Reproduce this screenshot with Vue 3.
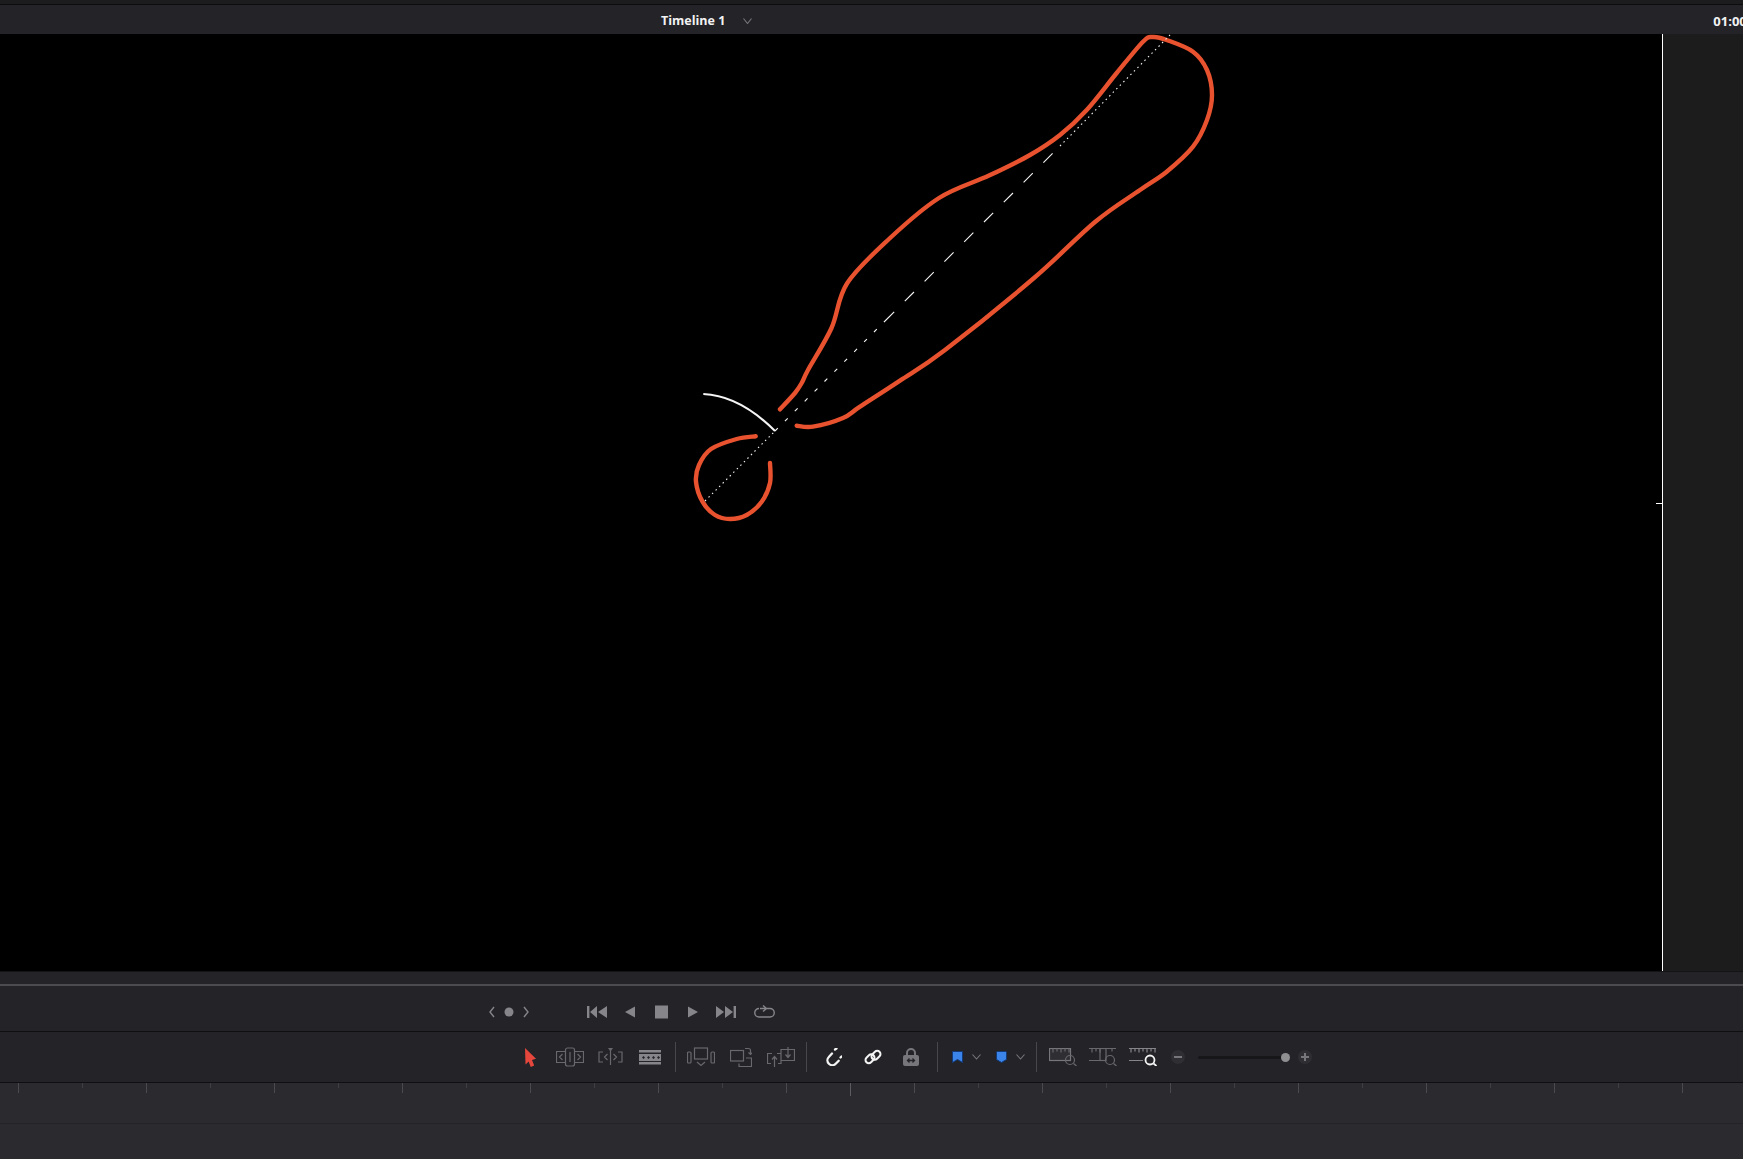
<template>
  <div class="editor">
    <div class="top-strip"></div>

    <header class="title-bar">
      <span class="title">Timeline 1</span>
      <svg class="title-chevron" width="9" height="6" viewBox="0 0 9 6"><path d="M.5.5l4 5 4-5" /></svg>
      <span class="timecode">01:00:00:00</span>
    </header>

    <section class="viewer">
      <div class="canvas">
        <svg class="drawing" width="1662" height="936" viewBox="0 34 1662 936">
          <path class="ink" :d="loopPath" />
          <path class="ink" :d="outlinePath" />
          <path class="arc" d="M703.3 394C727 395 752 408 775 431" />
          <path class="guide guide-dots" d="M705 501L775 431" />
          <path class="guide guide-short" d="M775 431L885 321" />
          <path class="guide guide-dash" d="M885 321L1060 146" />
          <path class="guide guide-dots" d="M1060 146L1170 35" />
          <path class="center-mark" d="M1656 503.5H1662" />
        </svg>
      </div>
      <div class="side-panel"></div>
    </section>

    <div class="splitter"></div>

    <div class="transport">
      <svg class="dim-stroke" width="40" height="14" viewBox="0 0 40 14">
        <path d="M5 2L1 7l4 5M35 2l4 5-4 5" />
        <circle class="solid" cx="20" cy="7" r="4.5" />
      </svg>
      <svg class="gap-58" width="20" height="14" viewBox="0 0 20 14"><path class="solid" d="M0 1h2.4v12H0zM10 1v12L3 7zM20 1v12L11 7z" /></svg>
      <svg class="gap-18" width="10" height="14" viewBox="0 0 10 14"><path class="solid" d="M10 1.5v11L0 7z" /></svg>
      <svg class="gap-20" width="13" height="14" viewBox="0 0 13 14"><rect class="solid" y=".5" width="13" height="13" /></svg>
      <svg class="gap-20" width="10" height="14" viewBox="0 0 10 14"><path class="solid" d="M0 1.5v11L10 7z" /></svg>
      <svg class="gap-18" width="20" height="14" viewBox="0 0 20 14"><path class="solid" d="M0 1v12l8-6zM9 1v12l8-6zM17.6 1H20v12h-2.4z" /></svg>
      <svg class="dim-stroke gap-18" width="21" height="16" viewBox="0 0 21 16">
        <path d="M5 4.500a4 4 0 0 0 0 8.500h11a4 4 0 0 0 0-8.500H6M9 1.500l3.500 3L9 7.500" />
      </svg>
    </div>

    <div class="tools">
      <svg width="11" height="19" viewBox="0 0 11 19"><path fill="#e5473c" d="M0 0l11 10.8-4 1.2 2.2 5.500-3.500 1.500-2-5.500L.5 16.500z" /></svg>

      <svg class="faint gap-20" width="28" height="20" viewBox="0 0 28 20">
        <path d="M9.5 4.500H.5v11h9M18.500 4.500h9v11h-9M6.500 7l-3 3 3 3M21.500 7l3 3-3 3" />
        <rect x="9.5" y="1" width="9" height="18" rx="2" />
        <path d="M14 5v10" stroke-width="2" />
      </svg>
      <svg class="faint gap-14" width="25" height="20" viewBox="0 0 25 20">
        <path d="M5 5H1v10h4M20 5h4v10h-4M9.5 7l-3 3 3 3M15.500 7l3 3-3 3M12.500 3v15" />
        <path class="fill" d="M10 1h5l-2.500 3.500z" />
      </svg>
      <svg class="gap-16" width="22" height="15" viewBox="0 0 22 15">
        <path fill="#85858a" d="M0 0h22v2.600H0zM0 12h22v2.600H0zM0 4h22v7H0z" />
        <path fill="#232328" d="M3 7.500l1.500-1.500L6 7.500 4.500 9zM8 7.500L9.500 6 11 7.500 9.500 9zM13 7.500L14.500 6 16 7.500 14.500 9zM18 7.500L19.500 6 21 7.500 19.500 9z" />
      </svg>

      <span class="divider gap-14"></span>

      <svg class="faint gap-11" width="28" height="20" viewBox="0 0 28 20">
        <rect x="7.5" y="1" width="13" height="11" />
        <rect x=".5" y="5" width="3.5" height="11" rx="1" />
        <rect x="24" y="5" width="3.5" height="11" rx="1" />
        <path d="M10 15l4 3.500 4-3.500" />
      </svg>
      <svg class="faint gap-15" width="22" height="20" viewBox="0 0 22 20">
        <rect x=".5" y="3.5" width="13" height="10.5" />
        <path d="M16 11h5.500v8.500H9V16.500M15 1.500h3.500a2 2 0 0 1 2 2V7M18.500 5.500l2 2 2-2" />
      </svg>
      <svg class="faint gap-15" width="28" height="22" viewBox="0 0 28 22">
        <path d="M5 7.500H.5v10H4M10 7.500h4v10h-3M14 3.500h13.500v11H14zM7.500 21v-10M5 13.500l2.500-3 2.500 3M21 1v10M18.500 8.500l2.500 3 2.500-3" />
      </svg>

      <span class="divider gap-11"></span>

      <svg class="bright gap-18" width="17" height="18" viewBox="0 0 17 18">
        <path d="M7 5.500L3.800 9a4.800 4.800 0 0 0 6.900 6.700l3-3" />
        <path d="M10 1.500l1.500-1M15.500 9.500l1-1" />
      </svg>
      <svg class="bright link gap-22" width="18" height="18" viewBox="0 0 18 18">
        <rect x="1" y="7.5" width="10" height="6.5" rx="3.25" transform="rotate(-45 6 10.75)" />
        <rect x="7" y="4" width="10" height="6.5" rx="3.25" transform="rotate(-45 12 7.25)" />
      </svg>
      <svg class="gap-21" width="16" height="18" viewBox="0 0 16 18">
        <path class="shackle" d="M4 7.500V5a4 4 0 0 1 8 0v2.500" />
        <rect fill="#77777b" y="7" width="16" height="11" rx="2" />
        <path class="cutout" d="M5 12.500h6M6.500 10.500l-2 2 2 2M9.500 10.500l2 2-2 2" />
      </svg>

      <span class="divider gap-18"></span>

      <svg class="gap-14" width="11" height="12" viewBox="0 0 11 12"><path class="blue" d="M.5.500h10v11L5.500 8.500l-5 3z" /></svg>
      <svg class="mini-chevron gap-9" width="9" height="6" viewBox="0 0 9 6"><path d="M.5.500l4 4.500 4-4.500" /></svg>
      <svg class="gap-15" width="11" height="12" viewBox="0 0 11 12"><path class="blue" d="M.5 1.500q0-1 1-1h8q1 0 1 1v7l-5 3-5-3z" /></svg>
      <svg class="mini-chevron gap-9" width="9" height="6" viewBox="0 0 9 6"><path d="M.5.500l4 4.500 4-4.500" /></svg>

      <span class="divider gap-11"></span>

      <svg class="faint gap-12" width="28" height="18" viewBox="0 0 28 18">
        <rect class="ruler-box" x=".5" y=".5" width="21" height="12" />
        <path d="M4 .5v4M8 .5v3M12 .5v4M16 .5v3M20 .5v4" />
        <circle cx="21" cy="12" r="4.5" />
        <path d="M24.500 15.500L27.500 18" stroke-width="1.8" />
      </svg>
      <svg class="faint gap-12" width="28" height="18" viewBox="0 0 28 18">
        <path d="M0 .5h27M0 12.500h13M3 .5v4M7 .5v3M11 .5v4M23 .5v3" />
        <rect x="11" y=".5" width="6" height="12" />
        <circle cx="21" cy="12" r="4.5" />
        <path d="M24.500 15.500L27.500 18" stroke-width="1.8" />
      </svg>
      <svg class="faint gap-12" width="28" height="18" viewBox="0 0 28 18">
        <path class="ticks" d="M0 .5h27M0 12.500h14M2 .5v4M6 .5v3M10 .5v4M14 .5v3M18 .5v4M22 .5v3M26 .5v4" />
        <circle class="lens" cx="21" cy="12" r="4.5" />
        <path class="lens" d="M24.500 15.500L27.500 18" />
      </svg>

      <span class="round-btn gap-14"><i class="minus"></i></span>
      <div class="zoom-slider gap-13"><span class="thumb"></span></div>
      <span class="round-btn gap-8"><i class="minus"></i><i class="minus upright"></i></span>
    </div>

    <div class="ruler">
      <span
        v-for="n in ticks"
        :key="n"
        class="tick"
        :class="{ major: n % 2 === 1, playhead: n === 14 }"
      ></span>
    </div>
    <div class="track"></div>
  </div>
</template>

<script setup>
// the scribble traced off the viewer, smoothed with catmull-rom
const loop = [
  [755.7, 436.3], [736.7, 439], [711, 449], [699, 465], [696, 481.7], [702.5, 501.7],
  [715, 515], [730, 519], [746.7, 515], [761.7, 501.7], [770, 483], [770, 463],
]

const outline = [
  [780, 409.3], [795, 393], [801.7, 383], [808, 370], [831.5, 328], [847, 283.5], [889, 239],
  [939, 198], [989, 175.6], [1030, 155], [1060, 135], [1086.7, 110], [1116.7, 73], [1143, 41.7],
  [1153, 37], [1166.7, 40], [1193, 51.7], [1207, 70], [1212, 95], [1207, 120], [1193, 146.7],
  [1166.7, 171.7], [1140, 190], [1095, 222], [1034, 278], [945, 350], [900, 380.7], [860, 406.7],
  [843, 418], [813, 426.7], [796.7, 425.7],
]

function smooth(points) {
  let d = `M${points[0][0]} ${points[0][1]}`
  for (let i = 0; i < points.length - 1; i++) {
    const p0 = points[i - 1] || points[i]
    const p1 = points[i]
    const p2 = points[i + 1]
    const p3 = points[i + 2] || p2
    const c1x = p1[0] + (p2[0] - p0[0]) / 6
    const c1y = p1[1] + (p2[1] - p0[1]) / 6
    const c2x = p2[0] - (p3[0] - p1[0]) / 6
    const c2y = p2[1] - (p3[1] - p1[1]) / 6
    d += `C${c1x} ${c1y} ${c2x} ${c2y} ${p2[0]} ${p2[1]}`
  }
  return d
}

const loopPath = smooth(loop)
const outlinePath = smooth(outline)

const ticks = Array.from({ length: 27 }, (_, i) => i + 1)
</script>

<style>
body {
  background: #232328;
  overflow: hidden;
}
</style>

<style scoped>
.editor {
  display: flex;
  flex-direction: column;
  height: 1159px;
  overflow: hidden;
  background: #232328;
  font-family: "Open Sans", "Liberation Sans", sans-serif;
}

.top-strip {
  height: 4px;
  flex-shrink: 0;
  background: #1c1c1e;
  border-bottom: 1px solid #0c0c0e;
}

.title-bar {
  display: flex;
  align-items: center;
  height: 29px;
  flex-shrink: 0;
  box-sizing: border-box;
  padding: 2px 0 0 661px;
  white-space: nowrap;
  overflow: hidden;
  font-size: 12.5px;
  font-weight: 700;
  color: #f2f2f2;
}

.title-chevron {
  margin-left: 18px;
  flex-shrink: 0;
}

.title-chevron path,
.mini-chevron path {
  fill: none;
  stroke: #77777b;
  stroke-width: 1.1;
}

.timecode {
  margin-left: 961px;
  flex-shrink: 0;
  font-size: 13px;
}

.viewer {
  display: flex;
  height: 937px;
  flex-shrink: 0;
}

.canvas {
  width: 1662px;
  background: #000;
  border-right: 1px solid #fff;
}

.drawing {
  display: block;
}

.ink {
  fill: none;
  stroke: #e8522f;
  stroke-width: 4.4;
  stroke-linecap: round;
  stroke-linejoin: round;
}

.arc {
  fill: none;
  stroke: #f5f5f5;
  stroke-width: 2;
}

.guide {
  fill: none;
  stroke: #f5f5f5;
  stroke-width: 1.1;
}

.guide-dots {
  stroke-dasharray: 1.5 3.5;
}

.guide-short {
  stroke-dasharray: 4 10;
}

.guide-dash {
  stroke-dasharray: 13 15;
}

.center-mark {
  stroke: #fff;
  stroke-width: 1;
}

.side-panel {
  flex: 1;
  background: #1c1c1c;
}

.splitter {
  height: 15px;
  flex-shrink: 0;
  box-sizing: border-box;
  border-bottom: 2px solid #4b4b50;
  box-shadow: inset 0 1px 0 #141416;
}

.transport {
  display: flex;
  align-items: center;
  height: 46px;
  padding: 6px 0 0 489px;
  flex-shrink: 0;
  box-sizing: border-box;
  border-bottom: 1px solid #0f0f12;
}

.tools {
  display: flex;
  align-items: center;
  height: 51px;
  padding-left: 525px;
  flex-shrink: 0;
  box-sizing: border-box;
  border-bottom: 1px solid #0f0f12;
}

svg {
  flex-shrink: 0;
}

.dim-stroke path,
.dim-stroke circle {
  fill: none;
  stroke: #85858a;
  stroke-width: 1.4;
}

.dim-stroke .solid,
.solid {
  fill: #85858a;
  stroke: none;
}

.faint path,
.faint rect,
.faint circle {
  fill: none;
  stroke: #68686d;
  stroke-width: 1.2;
}

.faint .fill {
  fill: #68686d;
  stroke: none;
}

.faint .ruler-box {
  fill: #2f2f33;
  stroke: #77777b;
}

.faint .ticks {
  stroke: #85858a;
}

.faint .lens {
  stroke: #f4f4f4;
  stroke-width: 1.8;
}

.bright path,
.bright rect {
  fill: none;
  stroke: #f4f4f4;
  stroke-width: 2.3;
  stroke-linecap: round;
}

.link rect {
  stroke-width: 2;
}

.shackle {
  fill: none;
  stroke: #77777b;
  stroke-width: 2;
}

.cutout {
  fill: none;
  stroke: #232328;
  stroke-width: 1.3;
}

.blue {
  fill: #3b84ea;
  stroke: #123a78;
  stroke-width: 1;
}

.divider {
  width: 1px;
  height: 30px;
  flex-shrink: 0;
  background: #47474c;
}

.round-btn {
  position: relative;
  width: 14px;
  height: 14px;
  flex-shrink: 0;
  border-radius: 50%;
  background: #2f2f33;
}

.minus {
  position: absolute;
  left: 3px;
  top: 6px;
  width: 8px;
  height: 2px;
  background: #77777b;
}

.minus.upright {
  transform: rotate(90deg);
}

.zoom-slider {
  display: flex;
  align-items: center;
  justify-content: flex-end;
  width: 92px;
  height: 3px;
  flex-shrink: 0;
  border-radius: 2px;
  background: #17171a;
}

.thumb {
  width: 9px;
  height: 9px;
  flex-shrink: 0;
  border-radius: 50%;
  background: #8f8f92;
}

.gap-8 { margin-left: 8px; }
.gap-9 { margin-left: 9px; }
.gap-11 { margin-left: 11px; }
.gap-12 { margin-left: 12px; }
.gap-13 { margin-left: 13px; }
.gap-14 { margin-left: 14px; }
.gap-15 { margin-left: 15px; }
.gap-16 { margin-left: 16px; }
.gap-18 { margin-left: 18px; }
.gap-20 { margin-left: 20px; }
.gap-21 { margin-left: 21px; }
.gap-22 { margin-left: 22px; }
.gap-58 { margin-left: 58px; }

.ruler {
  display: flex;
  align-items: flex-start;
  height: 40px;
  padding-left: 18px;
  flex-shrink: 0;
  background: #2a2a2f;
  border-bottom: 1px solid #242428;
}

.tick {
  width: 64px;
  height: 5px;
  flex-shrink: 0;
  box-sizing: border-box;
  border-left: 1px solid #3e3e43;
}

.tick.major {
  height: 10px;
  border-left-color: #4a4a4f;
}

.tick.playhead {
  height: 13px;
  border-left-color: #5b5b60;
}

.track {
  flex: 1;
  background: #2a2a2f;
}
</style>
